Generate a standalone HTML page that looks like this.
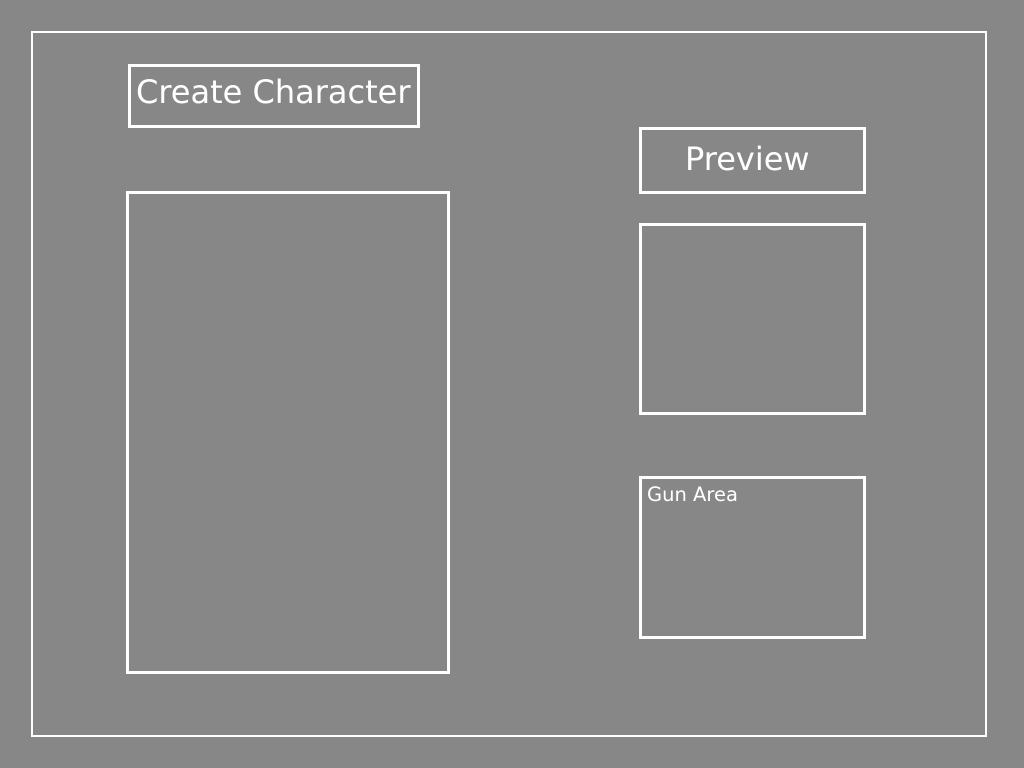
<!DOCTYPE html>
<html><head><style>
body{margin:0;width:1024px;height:768px;background:#878787;position:relative;overflow:hidden;font-family:"DejaVu Sans","Liberation Sans",sans-serif;color:#fff}
.b{position:absolute;box-sizing:border-box;border:3px solid #fff}
.t{position:absolute;white-space:nowrap;line-height:1}
</style></head><body>
<div class="b" style="left:31px;top:31px;width:956px;height:706px;border-width:2px"></div>
<div class="b" style="left:128px;top:64px;width:292px;height:64px"></div>
<div class="t" style="left:136px;top:76px;font-size:32px">Create Character</div>
<div class="b" style="left:126px;top:191px;width:324px;height:483px"></div>
<div class="b" style="left:639px;top:127px;width:227px;height:67px"></div>
<div class="t" style="left:685px;top:143px;font-size:32px">Preview</div>
<div class="b" style="left:639px;top:223px;width:227px;height:192px"></div>
<div class="b" style="left:639px;top:476px;width:227px;height:163px"></div>
<div class="t" style="left:647px;top:485px;font-size:19.5px">Gun Area</div>
</body></html>
